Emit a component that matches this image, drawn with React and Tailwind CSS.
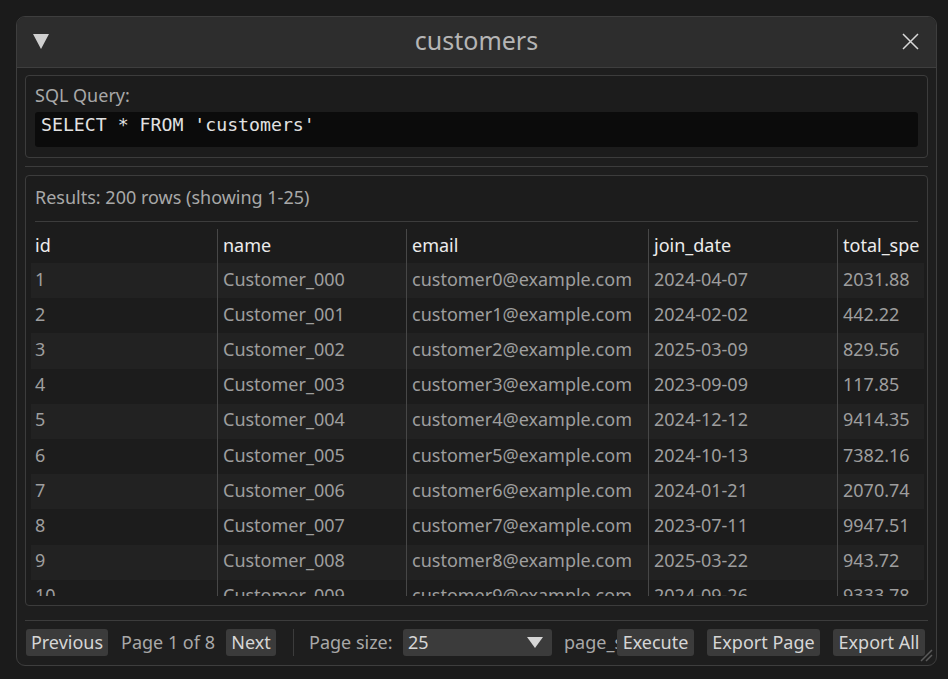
import React from 'react';

// Query result viewer window (dark immediate-mode style)
const columns = [
  { key: 'id', w: 'w-[186px]' },
  { key: 'name', w: 'w-[189px]' },
  { key: 'email', w: 'w-[242px]' },
  { key: 'join_date', w: 'w-[189px]' },
  { key: 'total_spe', w: 'w-[90px]' },
];

const rows = [
  ['1', 'Customer_000', 'customer0@example.com', '2024-04-07', '2031.88'],
  ['2', 'Customer_001', 'customer1@example.com', '2024-02-02', '442.22'],
  ['3', 'Customer_002', 'customer2@example.com', '2025-03-09', '829.56'],
  ['4', 'Customer_003', 'customer3@example.com', '2023-09-09', '117.85'],
  ['5', 'Customer_004', 'customer4@example.com', '2024-12-12', '9414.35'],
  ['6', 'Customer_005', 'customer5@example.com', '2024-10-13', '7382.16'],
  ['7', 'Customer_006', 'customer6@example.com', '2024-01-21', '2070.74'],
  ['8', 'Customer_007', 'customer7@example.com', '2023-07-11', '9947.51'],
  ['9', 'Customer_008', 'customer8@example.com', '2025-03-22', '943.72'],
  ['10', 'Customer_009', 'customer9@example.com', '2024-09-26', '9333.78'],
];

const Btn = ({ children, className = '' }) => (
  <div className={`shrink-0 h-[27px] flex items-center justify-center rounded-[3px] bg-[#3b3b3b] text-[#d6d6d6] whitespace-nowrap ${className}`}>
    {children}
  </div>
);

const App = () => {
  return (
    <div className="w-[948px] h-[679px] bg-[#1b1b1b] pt-[16px] pl-[16px] font-['Noto_Sans',sans-serif] text-[18px]">
      <div className="relative w-[921px] h-[650px] rounded-[9px] border border-[#3e3e3e] bg-[#1e1e1e] flex flex-col overflow-hidden">
        {/* title bar */}
        <div className="h-[51px] shrink-0 bg-[#2d2d2d] border-b border-[#3e3e3e] flex items-center relative">
          <svg className="absolute left-[16px] top-[17px]" width="16" height="15" viewBox="0 0 16 15">
            <path d="M0 0 L16 0 L8 15 Z" fill="#cfcfcf" />
          </svg>
          <div className="flex-1 text-center text-[25px] text-[#b5b5b5] pb-[2px]">customers</div>
          <svg className="absolute right-[17px] top-[16px]" width="17" height="17" viewBox="0 0 17 17">
            <path d="M1 1 L16 16 M16 1 L1 16" stroke="#d8d8d8" strokeWidth="1.5" />
          </svg>
        </div>

        <div className="flex flex-col px-[8px] pt-[7px]">
          {/* SQL panel */}
          <div className="h-[83px] rounded-[4px] border border-[#3c3c3c] bg-[#1c1c1c] px-[9px] pt-[8px]">
            <div className="text-[#a8a8a8] leading-[22px]">SQL Query:</div>
            <div className="mt-[6px] h-[35px] rounded-[3px] bg-[#0b0b0b] px-[6px] pt-[1px] font-['DejaVu_Sans_Mono',monospace] text-[18.2px] leading-[24px] text-[#e2e2e2]">
              SELECT * FROM 'customers'
            </div>
          </div>

          <div className="my-[8px] h-px bg-[#3c3c3c]" />

          {/* results panel */}
          <div className="h-[431px] rounded-[4px] border border-[#3c3c3c] bg-[#1c1c1c] overflow-hidden">
            <div className="px-[9px] pt-[10px] h-[45px] text-[#a8a8a8] leading-[22px]">
              <div>Results: 200 rows (showing 1-25)</div>
            </div>
            <div className="mx-[9px] h-px bg-[#3c3c3c]" />
            <div className="ml-[5px] mr-[3px] mt-[7px] h-[367px] overflow-hidden">
              <div className="flex h-[34px]">
                {columns.map((c, i) => (
                  <div
                    key={c.key}
                    className={`${c.w} shrink-0 h-full flex items-center pb-[2px] whitespace-nowrap overflow-hidden text-[#ececec] ${i === 0 ? 'pl-[4px]' : 'border-l border-[#474747] pl-[5px]'}`}
                  >
                    {c.key}
                  </div>
                ))}
              </div>
              {rows.map((r, ri) => (
                <div key={ri} className={`flex h-[35.2px] ${ri % 2 === 0 ? 'bg-[#222222]' : ''}`}>
                  {r.map((v, i) => (
                    <div
                      key={i}
                      className={`${columns[i].w} shrink-0 h-full flex items-center pb-[3px] whitespace-nowrap overflow-hidden text-[#9e9e9e] ${i === 0 ? 'pl-[4px]' : 'border-l border-[#474747] pl-[5px]'}`}
                    >
                      {v}
                    </div>
                  ))}
                </div>
              ))}
            </div>
          </div>

          <div className="mt-[14px] h-px bg-[#3c3c3c]" />

          {/* bottom bar */}
          <div className="mt-[8px] flex items-center h-[27px] ml-[1px] text-[#a8a8a8] leading-none">
            <Btn className="w-[82px] pb-[2px]">Previous</Btn>
            <span className="ml-[13px] w-[92px] shrink-0 whitespace-nowrap pb-[2px]">Page 1 of 8</span>
            <Btn className="ml-[13px] w-[50px] pb-[2px]">Next</Btn>
            <div className="ml-[17px] w-px h-[27px] bg-[#3c3c3c]" />
            <span className="ml-[15px] w-[82px] shrink-0 whitespace-nowrap pb-[2px]">Page size:</span>
            <div className="ml-[12px] w-[149px] shrink-0 h-[27px] rounded-[3px] bg-[#3b3b3b] flex items-center justify-between pl-[5px] pr-[9px] text-[#d6d6d6]">
              <span className="pb-[2px]">25</span>
              <svg width="16" height="12" viewBox="0 0 16 12">
                <path d="M0 0 L16 0 L8 11 Z" fill="#d6d6d6" />
              </svg>
            </div>
            <span className="ml-[12px] w-[53px] shrink-0 overflow-hidden whitespace-nowrap pb-[2px]">page_size:</span>
            <Btn className="w-[77px] pb-[2px]">Execute</Btn>
            <Btn className="ml-[13px] w-[113px] pb-[2px]">Export Page</Btn>
            <Btn className="ml-[13px] w-[92px] pb-[2px]">Export All</Btn>
          </div>
        </div>

        {/* resize grip */}
        <svg className="absolute right-[3px] bottom-[3px]" width="16" height="16" viewBox="0 0 16 16">
          <path d="M15 4 L4 15 M15 9 L9 15" stroke="#5a5a5a" strokeWidth="1.5" />
        </svg>
      </div>
    </div>
  );
};

export default App;
